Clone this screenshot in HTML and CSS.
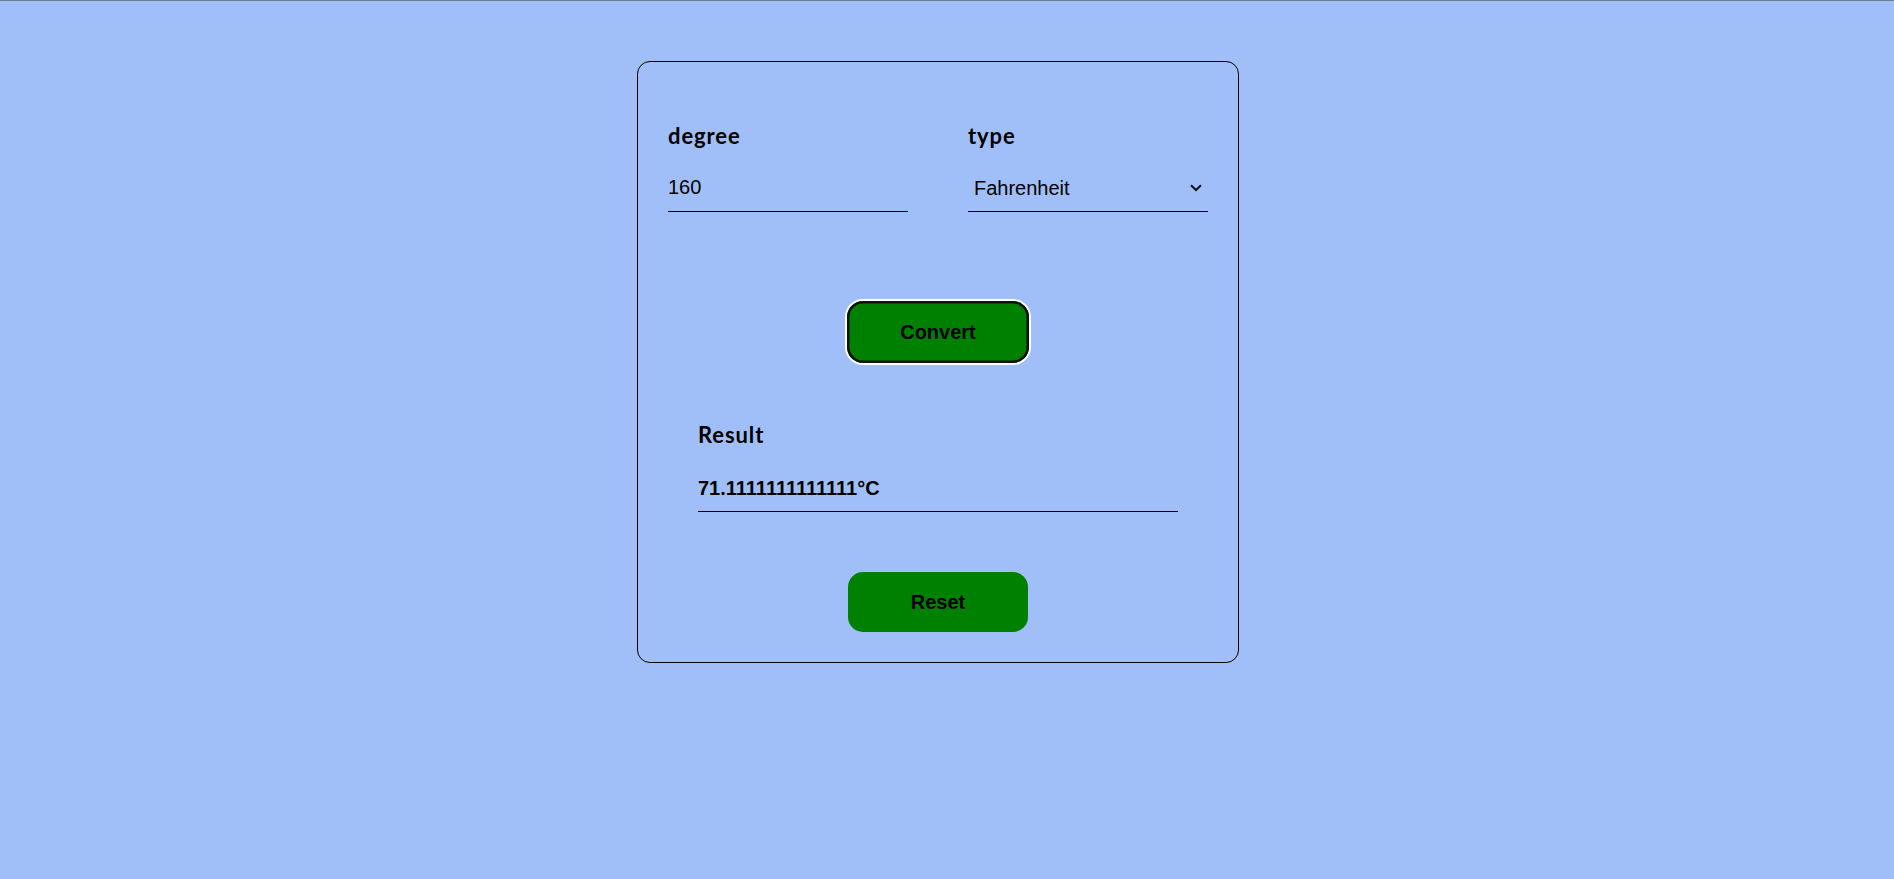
FILE: index.html
```html
<!DOCTYPE html>
<html lang="en">
<head>
<meta charset="utf-8">
<title>Temperature Converter</title>
<link rel="stylesheet" href="styles.css">
</head>
<body>
<div class="page">
  <form class="card">
    <div class="fields">
      <div class="field">
        <label class="label" for="degree">degree</label>
        <input class="input" id="degree" type="text" value="160">
      </div>
      <div class="field">
        <label class="label" for="type">type</label>
        <div class="select-wrap">
          <select class="select" id="type">
            <option>Fahrenheit</option>
            <option>Celsius</option>
          </select>
          <svg class="chevron" width="12" height="8" viewBox="0 0 12 8" aria-hidden="true"><path d="M1 1.2 L6 6 L11 1.2" fill="none" stroke="#111" stroke-width="2"/></svg>
        </div>
      </div>
    </div>
    <div class="actions convert-row">
      <button type="button" class="btn btn-focus">Convert</button>
    </div>
    <div class="result">
      <div class="label">Result</div>
      <div class="result-value">71.1111111111111°C</div>
    </div>
    <div class="actions reset-row">
      <button type="button" class="btn">Reset</button>
    </div>
  </form>
</div>
</body>
</html>
```
FILE: styles.css
```css
* { box-sizing: border-box; }
html, body { margin: 0; padding: 0; }
body {
  background: #a0bff8;
  border-top: 1px solid #6d7d8d;
  min-height: 879px;
  font-family: "Liberation Sans", Arial, sans-serif;
}
.page {
  display: flex;
  justify-content: center;
  padding-right: 18px;
}
.card {
  box-sizing: content-box;
  width: 540px;
  margin-top: 60px;
  padding: 62px 30px 30px;
  border: 1px solid #000;
  border-radius: 13px;
}
.fields {
  display: grid;
  grid-template-columns: 240px 240px;
  column-gap: 60px;
}
.field { display: flex; flex-direction: column; }
.label {
  display: block;
  font-family: "Lato", "Open Sans", sans-serif;
  font-weight: 700;
  font-size: 22px;
  line-height: 24px;
  letter-spacing: 0.9px;
  color: #000;
  margin-bottom: 16px;
}
.input, .select {
  width: 240px;
  height: 48px;
  margin: 0;
  padding: 0;
  border: none;
  border-bottom: 1px solid #000;
  background: transparent;
  font-family: "Liberation Sans", Arial, sans-serif;
  font-size: 20px;
  color: #000;
  outline: none;
  border-radius: 0;
}
.select-wrap { position: relative; }
.select {
  appearance: none;
  -webkit-appearance: none;
  padding-left: 6px;
}
.chevron {
  position: absolute;
  right: 6px;
  top: 20px;
  pointer-events: none;
}
.actions { display: flex; justify-content: center; }
.convert-row { margin-top: 89px; }
.btn {
  width: 180px;
  height: 60px;
  border: none;
  border-radius: 15px;
  background: #008000;
  color: #000;
  font-family: "Liberation Sans", Arial, sans-serif;
  font-weight: 700;
  font-size: 20px;
  padding: 0;
  cursor: pointer;
}
.btn-focus {
  height: 62px;
  width: 182px;
  border-radius: 16px;
  box-shadow: inset 0 0 0 2.5px #111, 0 0 0 2px #fff;
}
.result {
  margin: 60px 30px 0;
}
.result .label { margin-bottom: 29px; }
.result-value {
  font-family: "Liberation Sans", Arial, sans-serif;
  font-weight: 700;
  font-size: 20px;
  line-height: 23px;
  padding-top: 1px;
  padding-bottom: 11px;
  border-bottom: 1px solid #000;
}
.reset-row { margin-top: 60px; }
```
